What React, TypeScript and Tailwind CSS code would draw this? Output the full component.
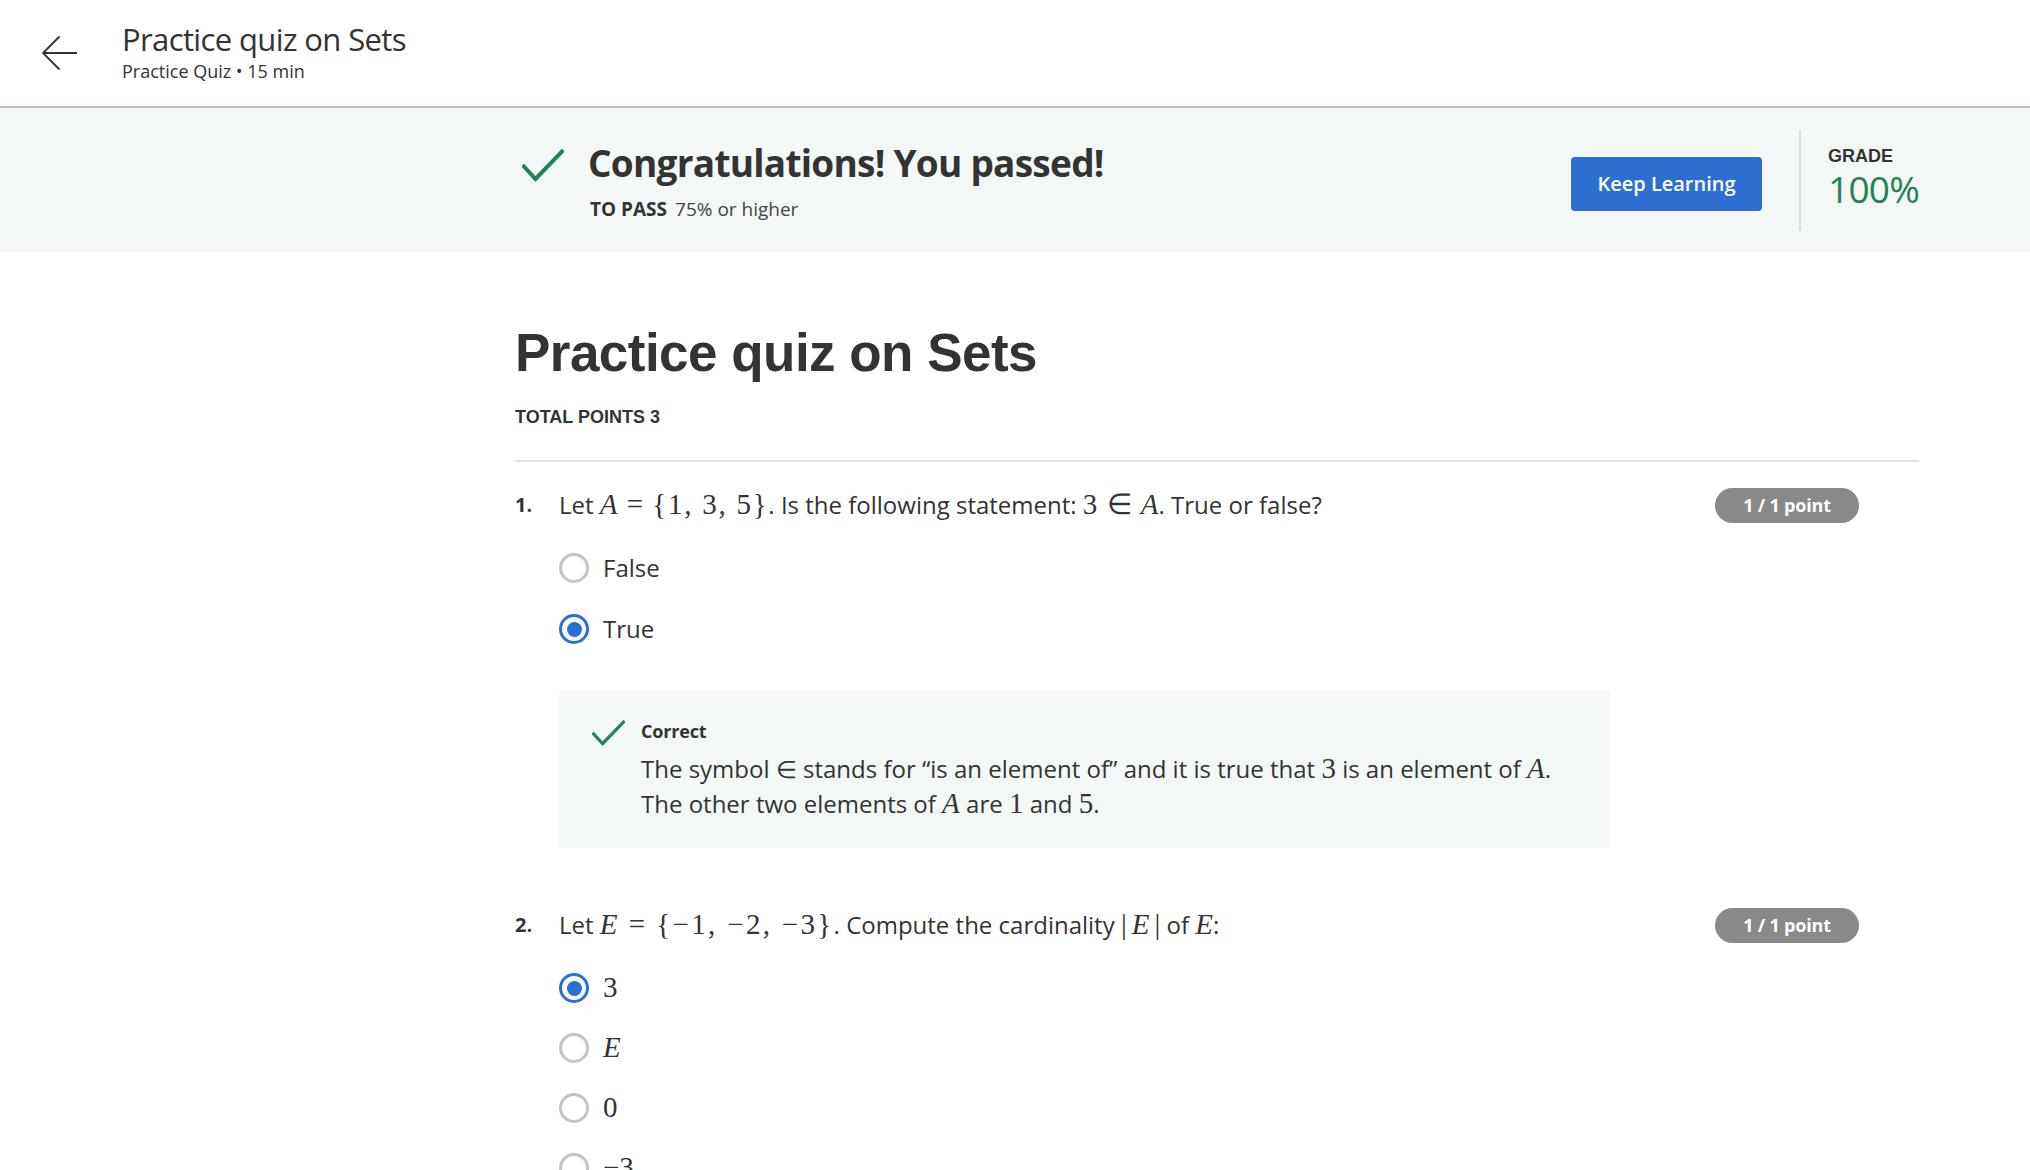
import React from "react";

const serif = "font-['Liberation_Serif',serif]";

function Check({ className }: { className?: string }) {
  return (
    <svg viewBox="0 0 42 34" className={className} fill="none">
      <path d="M2 17.5 L13.5 30 L40 2.5" stroke="#1f8354" strokeWidth="4" strokeLinecap="square" />
    </svg>
  );
}

function Radio({ checked }: { checked?: boolean }) {
  if (checked) {
    return (
      <span className="w-[30px] h-[30px] rounded-full border-[3px] border-[#2a6fd1] flex items-center justify-center shrink-0">
        <span className="w-[15px] h-[15px] rounded-full bg-[#2a6fd1]" />
      </span>
    );
  }
  return <span className="w-[30px] h-[30px] rounded-full border-[3px] border-[#c4c4c4] shrink-0" />;
}

function I({ children }: { children: React.ReactNode }) {
  return <span className={`${serif} italic text-[29px] leading-none`}>{children}</span>;
}
function R({ children }: { children: React.ReactNode }) {
  return <span className={`${serif} text-[29px] leading-none`}>{children}</span>;
}
function Rel({ children }: { children: React.ReactNode }) {
  return <span className={`${serif} text-[29px] leading-none mx-[3px]`}>{children}</span>;
}
function RelWide({ children }: { children: React.ReactNode }) {
  return <span className={`${serif} text-[29px] leading-none mx-[5px]`}>{children}</span>;
}
function MSet({ children }: { children: React.ReactNode }) {
  return <span className={`${serif} text-[29px] leading-none tracking-[0.06em]`}>{children}</span>;
}
function MSetWide({ children }: { children: React.ReactNode }) {
  return <span className={`${serif} text-[29px] leading-none tracking-[0.08em]`}>{children}</span>;
}

function Option({ checked, children }: { checked?: boolean; children: React.ReactNode }) {
  return (
    <div className="h-[40px] flex items-center gap-[14px]">
      <Radio checked={checked} />
      <div className="text-[24px] leading-[36px] text-[#333]">{children}</div>
    </div>
  );
}

function Badge() {
  return (
    <span className="mr-[60px] w-[144px] h-[35px] rounded-full bg-[#898989] text-white text-[18px] font-bold flex items-center justify-center tracking-[-0.01em] shrink-0">
      1 / 1 point
    </span>
  );
}

export default function App() {
  return (
    <div className="min-h-screen bg-white text-[#333] font-['Open_Sans',sans-serif]">
      <header className="h-[108px] border-b-2 border-[#bdbdbd] flex items-center">
        <div className="w-[122px] flex pl-[41px]">
          <svg width="37" height="36" viewBox="0 0 37 36" fill="none">
            <path d="M36 18H2 M18.5 1.5 L2 18 L18.5 34.5" stroke="#333" strokeWidth="1.8" />
          </svg>
        </div>
        <div className="flex flex-col -mt-[5px]">
          <h1 className="text-[31px] leading-[40px] tracking-[-0.02em]">Practice quiz on Sets</h1>
          <p className="text-[18px] leading-[24px]">Practice Quiz • 15 min</p>
        </div>
      </header>

      <section className="bg-[#f3f8f6] h-[144px]">
        <div className="ml-[515px] w-[1404px] h-full flex items-center">
          <div className="flex-1 flex items-start pl-[7px]">
            <Check className="w-[42px] h-[34px] mt-[9px]" />
            <div className="ml-[24px]">
              <h2 className="text-[37px] font-bold leading-[46px] tracking-[-0.02em]">Congratulations! You passed!</h2>
              <div className="mt-[11px] text-[19px] leading-[24px] pl-[2px]">
                <span className="font-bold">TO PASS</span>
                <span className="ml-[8px] text-[#444]">75% or higher</span>
              </div>
            </div>
          </div>
          <button className="mt-[7px] w-[191px] h-[54px] bg-[#2d6fd0] text-white rounded-[4px] text-[20px] font-semibold">
            Keep Learning
          </button>
          <div className="ml-[37px] w-[2px] h-[101px] bg-[#dcdcdc]" />
          <div className="ml-[27px] w-[91px] flex flex-col -mt-[4px]">
            <span className="font-['Liberation_Sans',sans-serif] font-bold text-[18px] leading-[22px] text-[#333]">GRADE</span>
            <span className="text-[37px] leading-[44px] text-[#1f8354] tracking-[-0.02em]">100%</span>
          </div>
        </div>
      </section>

      <main className="ml-[515px] w-[1404px]">
        <h1 className="mt-[66px] font-['Liberation_Sans',sans-serif] font-bold text-[53px] leading-[70px] tracking-[-0.01em] text-[#333]">
          Practice quiz on Sets
        </h1>
        <div className="mt-[17px] font-['Liberation_Sans',sans-serif] font-bold text-[18px] leading-[24px] text-[#333]">
          TOTAL POINTS 3
        </div>
        <div className="mt-[31px] h-[2px] bg-[#e1e1e1]" />

        <div className="mt-[23px] h-[40px] flex items-center">
          <span className="w-[44px] text-[20px] font-bold">1.</span>
          <div className="flex-1 text-[24px] leading-[36px]">
            Let <I>A</I> <Rel>=</Rel> <MSet>{"{1, 3, 5}"}</MSet>. Is the following statement: <R>3</R> <Rel>∈</Rel> <I>A</I>. True or false?
          </div>
          <Badge />
        </div>

        <div className="ml-[44px] mt-[23px] flex flex-col gap-[21px]">
          <Option>False</Option>
          <Option checked>True</Option>
        </div>

        <div className="ml-[44px] mt-[42px] w-[1051px] bg-[#f3f8f6] pl-[33px] pt-[27px] pb-[27px] flex">
          <Check className="w-[33px] h-[27px] mt-[2px] shrink-0" />
          <div className="ml-[16px]">
            <div className="text-[18px] font-bold leading-[26px] tracking-[-0.01em]">Correct</div>
            <div className="mt-[7px] text-[24px] leading-[35px] text-[#333]">
              The symbol ∈ stands for “is an element of” and it is true that <R>3</R> is an element of <I>A</I>.
              <br />
              The other two elements of <I>A</I> are <R>1</R> and <R>5</R>.
            </div>
          </div>
        </div>

        <div className="mt-[57px] h-[40px] flex items-center">
          <span className="w-[44px] text-[20px] font-bold">2.</span>
          <div className="flex-1 text-[24px] leading-[36px]">
            Let <I>E</I> <RelWide>=</RelWide> <MSetWide>{"{−1, −2, −3}"}</MSetWide>. Compute the cardinality{" "}
            <R>|</R><span className="mx-[5px]"><I>E</I></span><R>|</R> of <I>E</I>:
          </div>
          <Badge />
        </div>

        <div className="ml-[44px] mt-[23px] flex flex-col gap-[20px] pb-[40px]">
          <Option checked><R>3</R></Option>
          <Option><I>E</I></Option>
          <Option><R>0</R></Option>
          <Option><R>−3</R></Option>
        </div>
      </main>
    </div>
  );
}
